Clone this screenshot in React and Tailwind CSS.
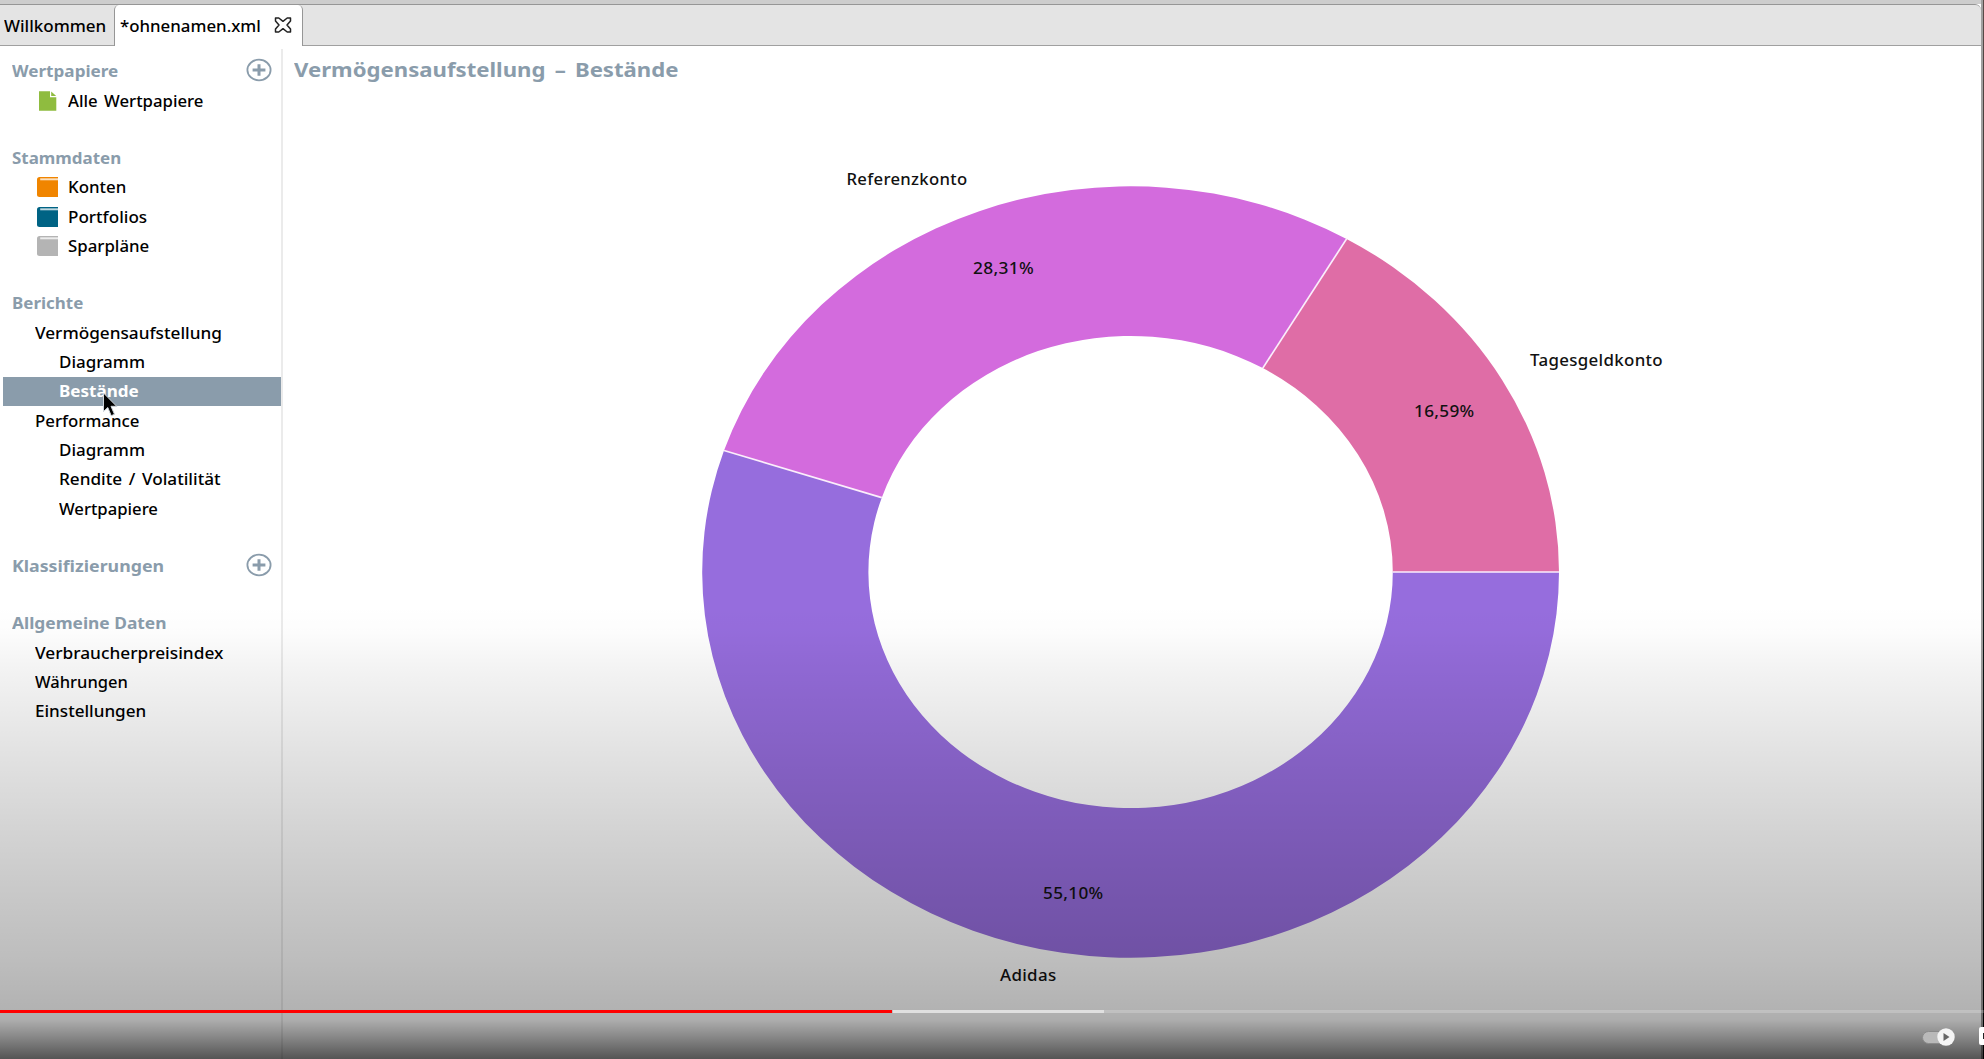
import { useLayoutEffect, useRef, useState } from "react";

// Text stretched horizontally so that it fills exactly `width` pixels.
function Label({ width, className = "", children }) {
  const ref = useRef(null);
  const [scale, setScale] = useState(1);
  useLayoutEffect(() => {
    setScale(width / ref.current.offsetWidth);
  }, [width]);
  return (
    <span className="block shrink-0" style={{ width }}>
      <span
        ref={ref}
        className={`inline-block origin-left whitespace-pre ${className}`}
        style={{ transform: `scaleX(${scale})` }}
      >
        {children}
      </span>
    </span>
  );
}

function PlusCircle() {
  return (
    <svg className="-mt-[2px] h-[24px] w-[26px]" viewBox="0 0 26 24" fill="none" stroke="#8a9cab">
      <ellipse cx="13" cy="12" rx="11.6" ry="10.3" strokeWidth="1.8" />
      <path d="M6.6 12h12.8M13 6.3v11.4" strokeWidth="3" />
    </svg>
  );
}

function FileIcon() {
  return (
    <svg className="h-[20px] w-[21px]" viewBox="0 0 21 20">
      <path d="M2 0.3h11v6h6.300V19.8H2z" fill="#8fbc3f" />
      <path d="M14.2 0.6l5 4.500h-5z" fill="#8fbc3f" />
    </svg>
  );
}

function BookIcon({ color }) {
  return (
    <svg className="h-[20px] w-[21px]" viewBox="0 0 21 20">
      <path d="M2.5 0H21v20H2.5C1 20 0 19.2 0 17.8V2.3C0 1 1 0 2.5 0z" fill={color} />
      <path d="M3.2 1.3H21v2H3.2z" fill="#fff" opacity=".75" />
    </svg>
  );
}

function Heading({ width, plus, children }) {
  return (
    <div className="flex h-[29.4px] items-center justify-between pl-[12px] pr-[9px] text-[#8a9cab]">
      <Label width={width} className="pt-px font-bold">{children}</Label>
      {plus && <PlusCircle />}
    </div>
  );
}

function Item({ width, level = 1, icon, selected, children }) {
  const indent = level === 2 ? "pl-[56px]" : icon ? "pl-[34px]" : "pl-[32px]";
  return (
    <div className={`ml-[3px] flex h-[29.4px] items-center ${indent} ${selected ? "bg-[#8a9cab] text-white" : ""}`}>
      {icon && <span className="mr-[10px] block">{icon}</span>}
      <Label width={width} className={`pt-px [word-spacing:2px] ${selected ? "font-bold" : ""}`}>{children}</Label>
    </div>
  );
}

function Sidebar() {
  return (
    <nav className="-ml-px box-content flex w-[281px] shrink-0 flex-col gap-[27.8px] border-l border-[#f0f0f0] pt-[10.500px] text-black">
      <section>
        <Heading width={106} plus>Wertpapiere</Heading>
        <Item width={135} icon={<FileIcon />}>Alle Wertpapiere</Item>
      </section>
      <section>
        <Heading width={109}>Stammdaten</Heading>
        <Item width={58} icon={<BookIcon color="#f08500" />}>Konten</Item>
        <Item width={79} icon={<BookIcon color="#006384" />}>Portfolios</Item>
        <Item width={81} icon={<BookIcon color="#b4b4b4" />}>Sparpläne</Item>
      </section>
      <section>
        <Heading width={71}>Berichte</Heading>
        <Item width={187}>Vermögensaufstellung</Item>
        <Item width={86} level={2}>Diagramm</Item>
        <Item width={80} level={2} selected>Bestände</Item>
        <Item width={104}>Performance</Item>
        <Item width={86} level={2}>Diagramm</Item>
        <Item width={162} level={2}>Rendite / Volatilität</Item>
        <Item width={99} level={2}>Wertpapiere</Item>
      </section>
      <section>
        <Heading width={152} plus>Klassifizierungen</Heading>
      </section>
      <section>
        <Heading width={155}>Allgemeine Daten</Heading>
        <Item width={188}>Verbraucherpreisindex</Item>
        <Item width={93}>Währungen</Item>
        <Item width={111}>Einstellungen</Item>
      </section>
    </nav>
  );
}

function TabBar() {
  return (
    <div className="flex h-[46px] shrink-0 flex-col">
      <div className="h-[4px] bg-[#cdcdcd]" />
      <div className="flex h-[42px] rounded-tr-md border-t border-[#969696] bg-[#e4e4e4] text-black">
        <div className="flex w-[114px] items-center border-b border-[#a0a0a0] pl-[4px] pt-[2px]">
          <Label width={102}>Willkommen</Label>
        </div>
        <div className="flex w-[189px] items-center rounded-t-[5px] border-x border-[#969696] bg-white pl-[5px] pt-px">
          <Label width={141}>*ohnenamen.xml</Label>
          <svg className="mb-[3px] ml-[13px] h-[16px] w-[18px]" viewBox="0 0 18 16" fill="#fff" stroke="#222" strokeWidth="1.5" strokeLinejoin="round">
            <path d="M1.5 1h3.300L9 4.300 13.200 1h3.300v3L13 8l3.500 4v3h-3.300L9 11.700 4.800 15H1.500v-3L5 8 1.500 4z" />
          </svg>
        </div>
        <div className="flex-1 border-b border-[#a0a0a0]" />
      </div>
    </div>
  );
}

const CX = 847.6, CY = 523;
const OUTER = [428.4, 385.7], INNER = [262.2, 236.1];
const SLICES = [
  { share: 16.59, color: "#df6da6" },
  { share: 28.31, color: "#d36bdd" },
  { share: 55.1, color: "#966ddd" },
];
const LABELS = [
  { text: "Referenzkonto", x: 563.5, y: 135.7, w: 121 },
  { text: "28,31%", x: 690, y: 225.4, w: 61 },
  { text: "Tagesgeldkonto", x: 1247, y: 317.2, w: 133 },
  { text: "16,59%", x: 1131, y: 367.5, w: 60.5 },
  { text: "55,10%", x: 760, y: 849.7, w: 60.5 },
  { text: "Adidas", x: 717, y: 932.3, w: 56.5 },
];

const point = ([rx, ry], share) => {
  const a = (share / 100) * 2 * Math.PI;
  return `${CX + rx * Math.cos(a)} ${CY - ry * Math.sin(a)}`;
};

function Donut() {
  let start = 0;
  const parts = SLICES.map(({ share, color }) => {
    const from = start;
    start += share;
    const large = share > 50 ? 1 : 0;
    return {
      color,
      d: `M${point(OUTER, from)}A${OUTER.join(" ")} 0 ${large} 0 ${point(OUTER, start)}L${point(INNER, start)}A${INNER.join(" ")} 0 ${large} 1 ${point(INNER, from)}Z`,
      edge: `M${point(OUTER, from)}L${point(INNER, from)}`,
    };
  });
  return (
    <svg className="block h-[1010px] w-[1698px]" viewBox="0 0 1698 1010">
      {parts.map((p) => <path key={p.d} d={p.d} fill={p.color} />)}
      {parts.map((p) => <path key={p.edge} d={p.edge} stroke="#fbeefb" strokeWidth="1.7" />)}
      {LABELS.map((l) => (
        <text key={l.text} x={l.x} y={l.y} textLength={l.w} lengthAdjust="spacingAndGlyphs" fill="#111" className="tracking-[0.3px]">{l.text}</text>
      ))}
    </svg>
  );
}

function PlayerOverlay() {
  return (
    <div className="absolute inset-0 flex flex-col justify-end bg-[linear-gradient(to_bottom,rgba(0,0,0,0)_606px,rgba(0,0,0,0.012)_632px,rgba(0,0,0,0.045)_664px,rgba(0,0,0,0.12)_763px,rgba(0,0,0,0.17)_827px,rgba(0,0,0,0.22)_900px,rgba(0,0,0,0.26)_960px,rgba(0,0,0,0.30)_1010px,rgba(0,0,0,0.32)_1020px,rgba(0,0,0,0.48)_1038px,rgba(0,0,0,0.67)_1059px)]">
      <div className="flex h-[3px] bg-white/20">
        <div className="w-[892px] bg-[#ff0000]" />
        <div className="ml-px w-[211px] bg-white/50" />
      </div>
      <div className="flex h-[46px] items-start justify-end pt-[14px]">
        <div className="mr-[24px] mt-px flex h-[18px] w-[33px] items-center justify-end">
          <div className="flex h-[13px] w-[33px] items-center justify-end rounded-full border border-[#8a8a8a] bg-[#b9b9b9]">
            <svg className="-mr-px h-[18px] w-[18px] shrink-0" viewBox="0 0 18 18">
              <circle cx="9" cy="9" r="8.7" fill="#f4f4f4" />
              <path d="M6.500 5v8l6-4z" fill="#666" />
            </svg>
          </div>
        </div>
        <div className="h-[18px] w-[5px] rounded-l-[2px] bg-white pl-[4px] pt-[6px]">
          <div className="h-[6px] w-px bg-[#222]" />
        </div>
      </div>
    </div>
  );
}

export default function App() {
  return (
    <div className="relative flex h-[1059px] w-[1984px] flex-col overflow-hidden bg-white font-['Noto_Sans',sans-serif] text-[16px] font-medium leading-[29px]">
      <div className="flex flex-1">
        <div className="flex flex-1 flex-col">
          <TabBar />
          <div className="flex flex-1">
            <Sidebar />
            <div className="mt-[3px] w-[2px] bg-[#ebebeb]" />
            <main className="relative flex-1 pt-[3px]">
              <h1 className="absolute left-[11px] top-[9px] text-[19.5px] font-bold text-[#8a9cab]">
                <Label width={384} className="[word-spacing:3px]">Vermögensaufstellung – Bestände</Label>
              </h1>
              <Donut />
            </main>
          </div>
        </div>
        <div className="w-[3px] border-l-2 border-[#a0a0a0] bg-[linear-gradient(to_bottom,#5a4b48,#101818_50%,#000)]" />
      </div>
      <svg className="absolute left-[101px] top-[391px] h-[30px] w-[20px]" viewBox="0 0 20 30">
        <path d="M2.5 2v18.500l4.300-4 3.400 8.200 3.300-1.400-3.500-8h5.700z" fill="#000" stroke="#cfd6dc" strokeWidth="1" />
      </svg>
      <PlayerOverlay />
    </div>
  );
}
